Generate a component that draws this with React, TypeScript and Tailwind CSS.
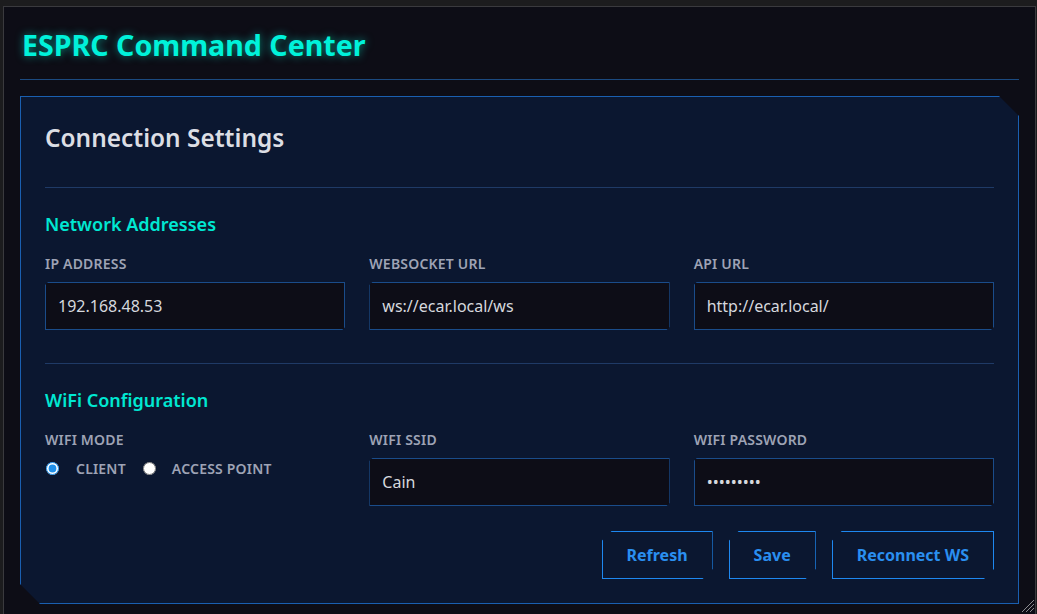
const font = { fontFamily: '"Noto Sans", "Open Sans", sans-serif' };

const Field = ({ label, value, type = "text" }: { label: string; value: string; type?: string }) => (
  <div className="flex flex-col">
    <label className="text-[14px] font-semibold uppercase tracking-[0.2px] text-[#9ea3b5] leading-5 mb-2">{label}</label>
    <input
      type={type}
      defaultValue={value}
      className="h-12 w-full border border-[#1a4c8a] bg-[#0d0d17] px-3 text-[16px] text-[#d6d8de] outline-none [clip-path:polygon(3px_0,100%_0,100%_calc(100%-3px),calc(100%-3px)_100%,0_100%,0_3px)]"
    />
  </div>
);

const Btn = ({ children }: { children: string }) => (
  <button className="h-12 border border-[#1e88f0] px-6 text-[16px] font-bold text-[#2a8ff0] [clip-path:polygon(10px_0,100%_0,100%_calc(100%-10px),calc(100%-10px)_100%,0_100%,0_10px)]">
    {children}
  </button>
);

const App = () => {
  return (
    <div className="relative h-[614px] overflow-hidden bg-[#1c1c1e] pl-[3px] pt-[6px]" style={font}>
      <div className="min-h-[700px] w-[1033px] border border-[#3a3a3e] bg-[#0d0d16] px-4">
        <header className="border-b border-[#1b4a80] pt-[18px] pb-[14px]">
          <h1 className="pl-[2px] text-[28.6px] font-bold leading-[40px] text-[#00f2da] [text-shadow:0_0_8px_rgba(0,240,215,0.55)]">
            ESPRC Command Center
          </h1>
        </header>

        <section className="mt-4 border border-[#1a5fb0] bg-[#0b1730] px-6 pt-6 pb-6 [clip-path:polygon(0_0,calc(100%-20px)_0,100%_20px,100%_100%,20px_100%,0_calc(100%-20px))]">
          <h2 className="text-[24.4px] font-semibold leading-[33px] text-[#dcdee4]">Connection Settings</h2>

          <div className="mt-[33px] border-t border-[#1f3a66]" />

          <h3 className="mt-[23px] text-[18px] font-semibold leading-[27px] text-[#00e8d2]">Network Addresses</h3>
          <div className="mt-4 grid grid-cols-3 gap-6">
            <Field label="IP Address" value="192.168.48.53" />
            <Field label="WebSocket URL" value="ws://ecar.local/ws" />
            <Field label="API URL" value="http://ecar.local/" />
          </div>

          <div className="mt-[33px] border-t border-[#1f3a66]" />

          <h3 className="mt-[23px] text-[18px] font-semibold leading-[27px] text-[#00e8d2]">WiFi Configuration</h3>
          <div className="mt-4 grid grid-cols-3 gap-6">
            <div className="flex flex-col">
              <span className="mb-2 text-[14px] font-semibold uppercase leading-5 tracking-[0.2px] text-[#9ea3b5]">WiFi Mode</span>
              <div className="flex items-center text-[14px] font-semibold uppercase tracking-[0.2px] text-[#9ea3b5]">
                <label className="flex items-center">
                  <input type="radio" name="mode" defaultChecked className="m-0 ml-px h-[13px] w-[13px] accent-[#1f8fe8]" />
                  <span className="ml-[17px]">Client</span>
                </label>
                <label className="ml-[17px] flex items-center">
                  <input type="radio" name="mode" className="m-0 h-[13px] w-[13px] accent-[#1f8fe8]" />
                  <span className="ml-[16px]">Access Point</span>
                </label>
              </div>
            </div>
            <Field label="WiFi SSID" value="Cain" />
            <Field label="WiFi Password" value="password1" type="password" />
          </div>

          <div className="mt-[25px] flex justify-end gap-4">
            <Btn>Refresh</Btn>
            <Btn>Save</Btn>
            <Btn>Reconnect WS</Btn>
          </div>
        </section>
      </div>

      <svg className="absolute bottom-px right-[2px]" width="14" height="14" viewBox="0 0 14 14">
        <g stroke="#8a8a8e" strokeWidth="1">
          <line x1="13" y1="1" x2="1" y2="13" />
          <line x1="13" y1="5" x2="5" y2="13" />
          <line x1="13" y1="9" x2="9" y2="13" />
        </g>
      </svg>
    </div>
  );
};

export default App;
